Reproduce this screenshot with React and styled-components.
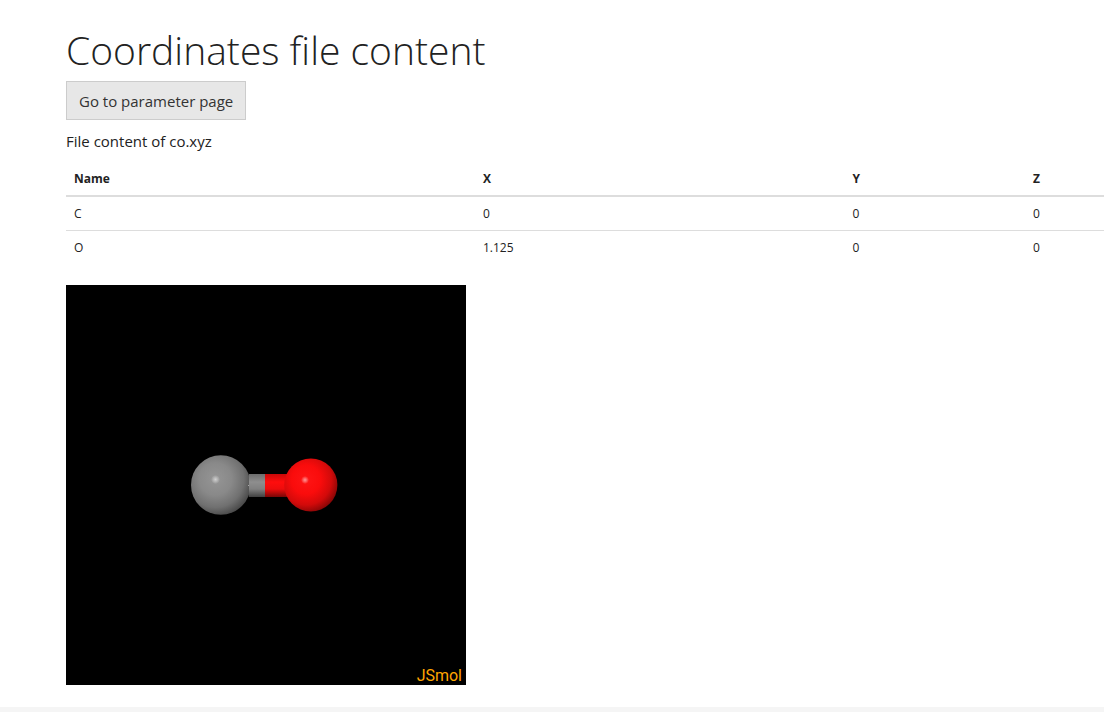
import React from "react";
import styled, { createGlobalStyle } from "styled-components";

const GlobalStyle = createGlobalStyle`
  *, *::before, *::after { box-sizing: border-box; }
  body {
    margin: 0;
    background: #fff;
    color: #222;
    font-family: "Open Sans", "Helvetica Neue", Arial, sans-serif;
    font-size: 15px;
    line-height: 21px;
    overflow-x: hidden;
  }
`;

const Content = styled.main`
  padding: 28px 0 22px 66px;
`;

const Title = styled.h1`
  margin: 0 0 9px;
  font-size: 39px;
  font-weight: 300;
  line-height: 44px;
`;

const Button = styled.button`
  display: block;
  padding: 9px 12px 7px;
  border: 1px solid #ccc;
  border-radius: 0;
  background: #e7e7e7;
  color: #333;
  font: inherit;
  text-rendering: auto;
  cursor: pointer;
`;

const Caption = styled.p`
  margin: 11px 0 10px;
`;

const Table = styled.table`
  width: 100%;
  margin-bottom: 21px;
  table-layout: fixed;
  border-collapse: separate;
  border-spacing: 0;
  font-size: 12px;
  line-height: 17px;
`;

const Column = styled.col`
  width: ${({ $share }) => $share};
`;

const HeaderCell = styled.th`
  padding: 8px;
  border-bottom: 2px solid #ddd;
  font-weight: 700;
  text-align: left;
`;

const Row = styled.tr`
  & + & > td { border-top: 1px solid #ddd; }
`;

const Cell = styled.td`
  padding: 8px;
`;

const Viewer = styled.figure`
  position: relative;
  width: 400px;
  height: 400px;
  margin: 0;
  background: #000;
`;

const Molecule = styled.svg`
  display: block;
  width: 100%;
  height: 100%;
`;

const ViewerLabel = styled.figcaption`
  position: absolute;
  right: 4px;
  bottom: 0;
  color: #ffa500;
  font-family: Roboto, sans-serif;
  font-size: 16px;
  line-height: 18px;
`;

const Footer = styled.footer`
  height: 60px;
  margin-bottom: -60px;
  background: #f5f5f5;
`;

const Page = styled.div`
  min-height: 100vh;
  overflow: hidden;
`;

const columns = [
  { name: "Name", share: "39.4%" },
  { name: "X", share: "35.6%" },
  { name: "Y", share: "17.4%" },
  { name: "Z", share: "7.6%" },
];

const atoms = [
  ["C", "0", "0", "0"],
  ["O", "1.125", "0", "0"],
];

export default function App() {
  return (
    <Page>
      <GlobalStyle />
      <Content>
        <Title>Coordinates file content</Title>
        <Button type="button">Go to parameter page</Button>
        <Caption id="file-caption">File content of co.xyz</Caption>
        <Table aria-labelledby="file-caption">
          <colgroup>
            {columns.map((c) => <Column key={c.name} $share={c.share} />)}
          </colgroup>
          <thead>
            <tr>
              {columns.map((c) => <HeaderCell key={c.name} scope="col">{c.name}</HeaderCell>)}
            </tr>
          </thead>
          <tbody>
            {atoms.map((atom) => (
              <Row key={atom[0]}>
                {atom.map((value, i) => <Cell key={columns[i].name}>{value}</Cell>)}
              </Row>
            ))}
          </tbody>
        </Table>
        <Viewer>
          <Molecule viewBox="0 0 400 400" role="img" aria-label="Carbon monoxide molecule">
            <defs>
              <radialGradient id="carbon" cx="0.41" cy="0.4" r="0.68">
                <stop offset="0" stopColor="#959595" />
                <stop offset="0.4" stopColor="#898989" />
                <stop offset="0.7" stopColor="#707070" />
                <stop offset="1" stopColor="#3c3c3c" />
              </radialGradient>
              <radialGradient id="oxygen" cx="0.41" cy="0.4" r="0.68">
                <stop offset="0" stopColor="#ff1414" />
                <stop offset="0.4" stopColor="#fa0c0c" />
                <stop offset="0.7" stopColor="#d20a0a" />
                <stop offset="1" stopColor="#700505" />
              </radialGradient>
              <radialGradient id="glint">
                <stop offset="0" stopColor="#fff" stopOpacity="0.55" />
                <stop offset="0.4" stopColor="#fff" stopOpacity="0.35" />
                <stop offset="1" stopColor="#fff" stopOpacity="0" />
              </radialGradient>
              <linearGradient id="carbonBond" x1="0" y1="0" x2="0" y2="1">
                <stop offset="0" stopColor="#6c6c6c" />
                <stop offset="0.35" stopColor="#8e8e8e" />
                <stop offset="0.65" stopColor="#808080" />
                <stop offset="1" stopColor="#404040" />
              </linearGradient>
              <linearGradient id="oxygenBond" x1="0" y1="0" x2="0" y2="1">
                <stop offset="0" stopColor="#c80808" />
                <stop offset="0.35" stopColor="#ff0d0d" />
                <stop offset="0.65" stopColor="#ee0c0c" />
                <stop offset="1" stopColor="#780606" />
              </linearGradient>
            </defs>
            <circle cx="154.8" cy="200" r="29.8" fill="url(#carbon)" />
            <rect x="183" y="189" width="16" height="23" fill="url(#carbonBond)" />
            <rect x="199" y="189" width="23" height="23" fill="url(#oxygenBond)" />
            <circle cx="244.8" cy="200" r="26.6" fill="url(#oxygen)" />
            <circle cx="149.5" cy="194.5" r="4.5" fill="url(#glint)" />
            <circle cx="239" cy="195" r="4" fill="url(#glint)" />
            <rect x="182" y="200" width="1" height="1" fill="#a8a8a8" />
          </Molecule>
          <ViewerLabel>JSmol</ViewerLabel>
        </Viewer>
      </Content>
      <Footer />
    </Page>
  );
}
